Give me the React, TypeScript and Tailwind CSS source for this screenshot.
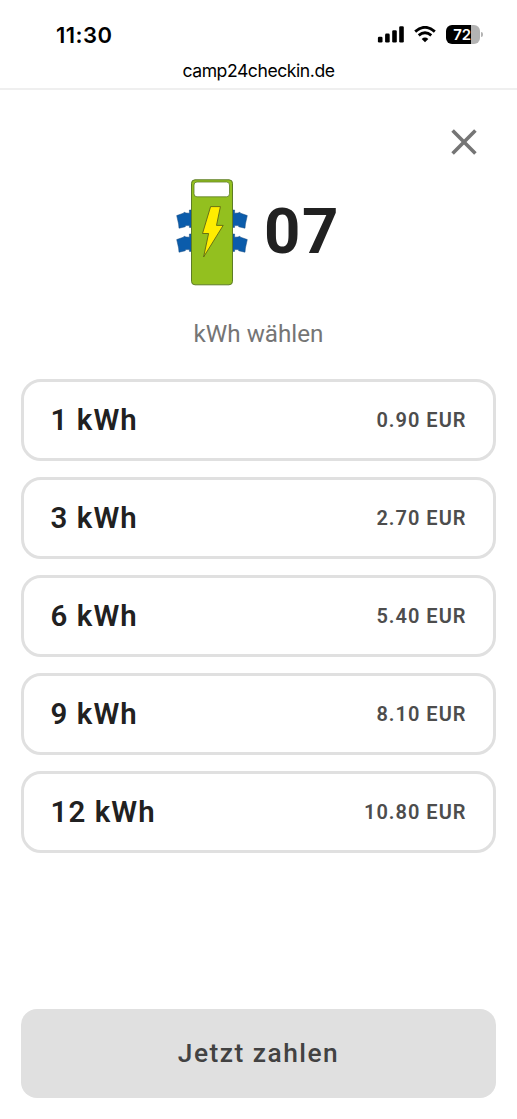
const options = [
  { kwh: 1, price: '0.90 EUR' },
  { kwh: 3, price: '2.70 EUR' },
  { kwh: 6, price: '5.40 EUR' },
  { kwh: 9, price: '8.10 EUR' },
  { kwh: 12, price: '10.80 EUR' },
]

function SignalIcon() {
  return (
    <svg width="27" height="17" viewBox="0 0 27 17" fill="#000">
      <rect x="0.9" y="10.7" width="4.6" height="5.8" rx="1.3" />
      <rect x="8.1" y="7.6" width="4.6" height="8.9" rx="1.3" />
      <rect x="15.2" y="4.2" width="4.6" height="12.3" rx="1.3" />
      <rect x="22.2" y="0.2" width="4.6" height="16.3" rx="1.3" />
    </svg>
  )
}

function WifiIcon() {
  return (
    <svg width="22" height="17" viewBox="0 0 22 17" fill="none" stroke="#000">
      <path d="M1.2 5.6 Q11 -2.9 20.8 5.6" strokeWidth="2.9" />
      <path d="M4.7 9.4 Q11 4 17.3 9.4" strokeWidth="2.8" />
      <path d="M11 16.3 L7.7 12.9 Q11 10.2 14.3 12.9 Z" fill="#000" stroke="none" />
    </svg>
  )
}

function Battery() {
  return (
    <div className="flex items-center">
      <div className="flex h-[19px] w-[34px] items-center justify-center rounded-[6px] bg-linear-to-r from-black from-[73%] to-[#b3b3b3] to-[73%] pr-[2px]">
        <span className="font-[Inter] text-[15px] leading-none font-semibold tracking-[-0.3px] text-white">72</span>
      </div>
      <div className="ml-[1px] h-[5px] w-[2px] rounded-r-full bg-[#b3b3b3]" />
    </div>
  )
}

function Plug({ transform }: { transform?: string }) {
  return (
    <path
      transform={transform}
      d="M15.3 31 V48.4 H13.4 V46.6 H9.8 L9.2 47.8 L3 49.2 L2.6 45 L0.7 36.6 L7.4 34.2 L8.2 33.2 L10 34 L13.4 34.2 V31 Z"
    />
  )
}

function ChargerIcon() {
  return (
    <svg width="72" height="107" viewBox="0 0 72 107">
      <g fill="#0b5cab" stroke="#174a80" strokeWidth="0.5">
        <Plug />
        <Plug transform="translate(0 24)" />
        <Plug transform="translate(72 0) scale(-1 1)" />
        <Plug transform="translate(72 24) scale(-1 1)" />
      </g>
      <rect x="15.5" y="0.8" width="41" height="105" rx="3.5" fill="#93c01f" stroke="#5d7c25" />
      <rect x="18" y="3" width="35.5" height="14.8" rx="3" fill="#fff" stroke="#5d7c25" strokeWidth="0.8" />
      <path
        d="M34.6 27.6 H44.4 L40.5 46.4 H47.2 L27.6 78 L32.6 54.5 H26.5 Z"
        fill="#ffed00"
        stroke="#5e6614"
        strokeWidth="0.9"
      />
    </svg>
  )
}

function CloseIcon() {
  return (
    <svg width="26" height="26" viewBox="0 0 26 26" stroke="#757575" strokeWidth="3.6">
      <path d="M1.6 1.6 L24.4 24.4 M24.4 1.6 L1.6 24.4" />
    </svg>
  )
}

export default function App() {
  return (
    <div className="flex h-[1119px] w-[517px] flex-col overflow-hidden bg-white font-[Roboto,sans-serif]">
      {/* Browser chrome */}
      <header className="h-[90px] shrink-0 border-b-2 border-[#efefef] text-black">
        <div className="flex h-[60px] items-center justify-between pt-[9px] pr-[34px] pl-[56px]">
          <span className="font-[Inter] text-[22px] leading-none font-semibold tracking-[0.5px]">11:30</span>
          <div className="flex items-center gap-[10px]">
            <SignalIcon />
            <WifiIcon />
            <Battery />
          </div>
        </div>
        <p className="text-center font-[Inter] text-[17.6px] leading-[21px] tracking-[-0.45px]">camp24checkin.de</p>
      </header>

      <main className="flex flex-1 flex-col px-[21px] pb-[21px]">
        <div className="flex h-[89px] justify-end pt-[39px] pr-[19px]">
          <button className="h-[26px]" aria-label="Schließen">
            <CloseIcon />
          </button>
        </div>

        {/* Station */}
        <div className="flex h-[107px] items-center pl-[155px]">
          <ChargerIcon />
          <h1 className="mb-[2px] ml-[16px] text-[63.5px] leading-none font-bold tracking-[1.5px] text-[#212121]">07</h1>
        </div>

        <p className="mt-[32px] h-[32px] text-center text-[24.2px] leading-[32px] text-[#757575]">kWh wählen</p>

        <div className="mt-[29px] flex flex-col gap-[16.1px]">
          {options.map(({ kwh, price }) => (
            <button
              key={kwh}
              className="flex h-[82px] items-center justify-between rounded-[20px] border-3 border-[#e0e0e0] px-[26.5px]"
            >
              <span className="pt-[1px] text-[29.4px] leading-none font-semibold tracking-[1.1px] text-[#212121]">
                {kwh} kWh
              </span>
              <span className="text-[20px] leading-none font-semibold tracking-[1px] text-[#4d4d4d]">{price}</span>
            </button>
          ))}
        </div>

        <button className="mt-auto h-[89px] rounded-[16px] bg-[#e0e0e0] text-[26.3px] font-medium tracking-[1.5px] text-[#424242]">
          Jetzt zahlen
        </button>
      </main>
    </div>
  )
}
